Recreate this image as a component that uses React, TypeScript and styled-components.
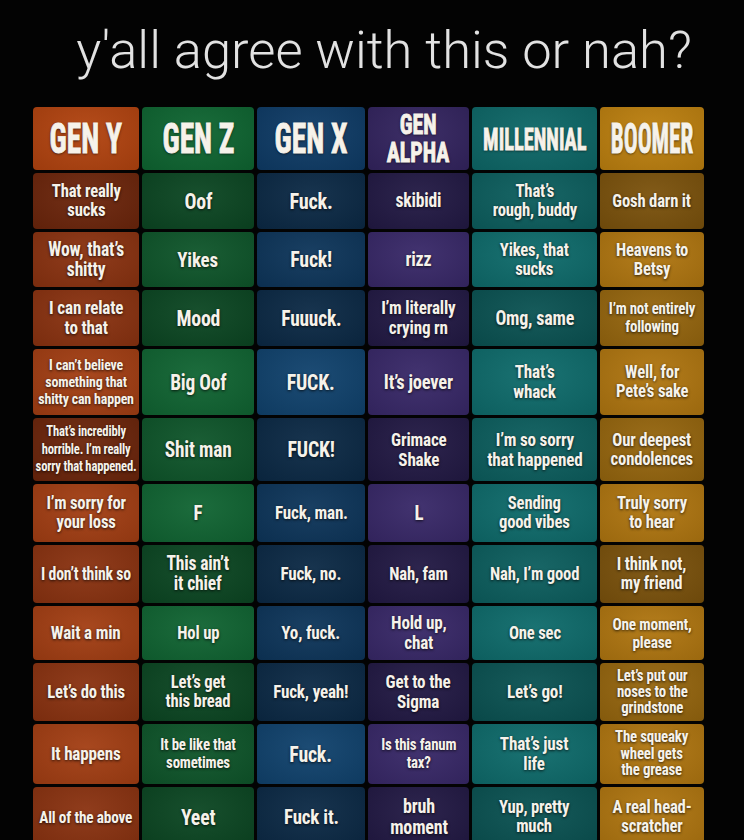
import React from "react";
import styled, { createGlobalStyle } from "styled-components";

const GlobalStyle = createGlobalStyle`
  html, body { margin: 0; padding: 0; background: #020202; }
  #root { width: 744px; height: 840px; }
`;

const Page = styled.div`
  width: 744px;
  height: 840px;
  overflow: hidden;
  background: #030303;
  display: flex;
  flex-direction: column;
`;

const Title = styled.h1`
  flex-shrink: 0;
  margin: 22px 0 0 0;
  padding-left: 24px;
  height: 85px;
  font-family: Roboto, "Liberation Sans", sans-serif;
  font-weight: 300;
  font-size: 52.5px;
  line-height: 56px;
  color: #e2e2e2;
  text-align: center;
`;

const Grid = styled.div`
  flex-shrink: 0;
  margin-left: 33px;
  display: grid;
  grid-template-columns: 106px 112px 108px 101px 125px 104px;
  grid-template-rows: 63px 56px 55px 56px 66px 63px 58px 58px 54px 58px 60px 60px;
  gap: 3px;
`;

const Cell = styled.div<{ $bg: string }>`
  border-radius: 4px;
  background-color: ${(p) => p.$bg};
  background-image: radial-gradient(
    ellipse at 50% 40%,
    rgba(255, 255, 255, 0.05),
    rgba(0, 0, 0, 0.12)
  );
  display: flex;
  align-items: center;
  justify-content: center;
  text-align: center;
  overflow: hidden;
  color: #f6f2ea;
  font-family: "Roboto Condensed", "Liberation Sans Narrow", "DejaVu Sans Condensed", "Liberation Sans", sans-serif;
  font-weight: 700;
  text-shadow: 0 1px 3px rgba(0, 0, 0, 0.75);
`;

const CellText = styled.span<{ $size: number; $lh: number }>`
  display: inline-block;
  white-space: pre;
  font-size: ${(p) => p.$size}px;
  line-height: ${(p) => p.$lh}px;
  letter-spacing: -0.2px;
  transform: scaleX(0.9);
`;

const HeaderLabel = styled.span<{ $scale: number; $size: number }>`
  display: inline-block;
  white-space: pre;
  font-size: ${(p) => p.$size}px;
  line-height: 1;
  -webkit-text-stroke: 0.9px #f6f2ea;
  transform: scaleX(${(p) => p.$scale});
`;

type Shade = "d" | "m" | "l";

interface Column {
  header: string;
  headerSize: number;
  headerScale: number;
  headerBg: string;
  shades: Record<Shade, string>;
  cells: { text: string; shade: Shade; size?: number; lh?: number }[];
}

const columns: Column[] = [
  {
    header: "GEN Y",
    headerSize: 42,
    headerScale: 0.7,
    headerBg: "#b2430f",
    shades: { d: "#6c250b", m: "#8a3210", l: "#a33e13" },
    cells: [
      { text: "That really\nsucks", shade: "d" },
      { text: "Wow, that’s\nshitty", shade: "m", size: 19.5 },
      { text: "I can relate\nto that", shade: "m", size: 19 },
      { text: "I can’t believe\nsomething that\nshitty can happen", shade: "l", size: 15.5, lh: 17 },
      { text: "That’s incredibly\nhorrible. I’m really\nsorry that happened.", shade: "d", size: 14, lh: 17.5 },
      { text: "I’m sorry for\nyour loss", shade: "l" },
      { text: "I don’t think so", shade: "m", size: 17.5 },
      { text: "Wait a min", shade: "l", size: 19 },
      { text: "Let’s do this", shade: "m" },
      { text: "It happens", shade: "l", size: 19 },
      { text: "All of the above", shade: "m", size: 17 },
    ],
  },
  {
    header: "GEN Z",
    headerSize: 42,
    headerScale: 0.7,
    headerBg: "#0e6531",
    shades: { d: "#0b4622", m: "#0e552a", l: "#106432" },
    cells: [
      { text: "Oof", shade: "d", size: 22 },
      { text: "Yikes", shade: "m", size: 21 },
      { text: "Mood", shade: "d", size: 22 },
      { text: "Big Oof", shade: "l", size: 21.5 },
      { text: "Shit man", shade: "m", size: 21.5 },
      { text: "F", shade: "l", size: 21 },
      { text: "This ain’t\nit chief", shade: "d", size: 19.5 },
      { text: "Hol up", shade: "l" },
      { text: "Let’s get\nthis bread", shade: "d" },
      { text: "It be like that\nsometimes", shade: "m", size: 16.5, lh: 18 },
      { text: "Yeet", shade: "d", size: 22 },
    ],
  },
  {
    header: "GEN X",
    headerSize: 42,
    headerScale: 0.7,
    headerBg: "#0e3b66",
    shades: { d: "#0b2945", m: "#0d355a", l: "#10426d" },
    cells: [
      { text: "Fuck.", shade: "d", size: 22.5 },
      { text: "Fuck!", shade: "m", size: 22 },
      { text: "Fuuuck.", shade: "d", size: 21.5 },
      { text: "FUCK.", shade: "l", size: 22 },
      { text: "FUCK!", shade: "d", size: 22 },
      { text: "Fuck, man.", shade: "m", size: 19 },
      { text: "Fuck, no.", shade: "d", size: 19 },
      { text: "Yo, fuck.", shade: "m", size: 19 },
      { text: "Fuck, yeah!", shade: "d", size: 19 },
      { text: "Fuck.", shade: "l", size: 22 },
      { text: "Fuck it.", shade: "d", size: 21 },
    ],
  },
  {
    header: "GEN\nALPHA",
    headerSize: 28,
    headerScale: 0.78,
    headerBg: "#33245f",
    shades: { d: "#221944", m: "#2c2055", l: "#382868" },
    cells: [
      { text: "skibidi", shade: "d", size: 19.5 },
      { text: "rizz", shade: "l", size: 20 },
      { text: "I’m literally\ncrying rn", shade: "d", size: 19 },
      { text: "It’s joever", shade: "l", size: 20.5 },
      { text: "Grimace\nShake", shade: "d", size: 19 },
      { text: "L", shade: "l", size: 21 },
      { text: "Nah, fam", shade: "d" },
      { text: "Hold up,\nchat", shade: "l", size: 19 },
      { text: "Get to the\nSigma", shade: "d", size: 19 },
      { text: "Is this fanum\ntax?", shade: "l", size: 16.5, lh: 18 },
      { text: "bruh\nmoment", shade: "d", size: 20 },
    ],
  },
  {
    header: "MILLENNIAL",
    headerSize: 32,
    headerScale: 0.64,
    headerBg: "#0d6767",
    shades: { d: "#0a5252", m: "#0c5e5e", l: "#0e6b6b" },
    cells: [
      { text: "That’s\nrough, buddy", shade: "m" },
      { text: "Yikes, that\nsucks", shade: "l" },
      { text: "Omg, same", shade: "d", size: 20 },
      { text: "That’s\nwhack", shade: "l", size: 19 },
      { text: "I’m so sorry\nthat happened", shade: "m", size: 19 },
      { text: "Sending\ngood vibes", shade: "l" },
      { text: "Nah, I’m good", shade: "m" },
      { text: "One sec", shade: "l" },
      { text: "Let’s go!", shade: "d", size: 19 },
      { text: "That’s just\nlife", shade: "l", size: 19 },
      { text: "Yup, pretty\nmuch", shade: "d" },
    ],
  },
  {
    header: "BOOMER",
    headerSize: 42,
    headerScale: 0.55,
    headerBg: "#bd800f",
    shades: { d: "#7b520c", m: "#96660e", l: "#b07610" },
    cells: [
      { text: "Gosh darn it", shade: "d" },
      { text: "Heavens to\nBetsy", shade: "l" },
      { text: "I’m not entirely\nfollowing", shade: "m", size: 16.5, lh: 18 },
      { text: "Well, for\nPete’s sake", shade: "l" },
      { text: "Our deepest\ncondolences", shade: "m" },
      { text: "Truly sorry\nto hear", shade: "l" },
      { text: "I think not,\nmy friend", shade: "d" },
      { text: "One moment,\nplease", shade: "l", size: 17, lh: 18.5 },
      { text: "Let’s put our\nnoses to the\ngrindstone", shade: "m", size: 16.5, lh: 16 },
      { text: "The squeaky\nwheel gets\nthe grease", shade: "l", size: 16.5, lh: 16.5 },
      { text: "A real head-\nscratcher", shade: "l" },
    ],
  },
];

const ROWS = 11;

export default function App() {
  const items: React.ReactNode[] = [];
  columns.forEach((col) => {
    items.push(
      <Cell key={`h-${col.header}`} $bg={col.headerBg}>
        <HeaderLabel $scale={col.headerScale} $size={col.headerSize}>
          {col.header}
        </HeaderLabel>
      </Cell>
    );
  });
  for (let r = 0; r < ROWS; r++) {
    columns.forEach((col, c) => {
      const cell = col.cells[r];
      const size = cell.size ?? 18.5;
      const lh = cell.lh ?? Math.round(size * 1.05);
      items.push(
        <Cell key={`${r}-${c}`} $bg={col.shades[cell.shade]}>
          <CellText $size={size} $lh={lh}>
            {cell.text}
          </CellText>
        </Cell>
      );
    });
  }
  return (
    <>
      <GlobalStyle />
      <Page>
        <Title>y'all agree with this or nah?</Title>
        <Grid>{items}</Grid>
      </Page>
    </>
  );
}
